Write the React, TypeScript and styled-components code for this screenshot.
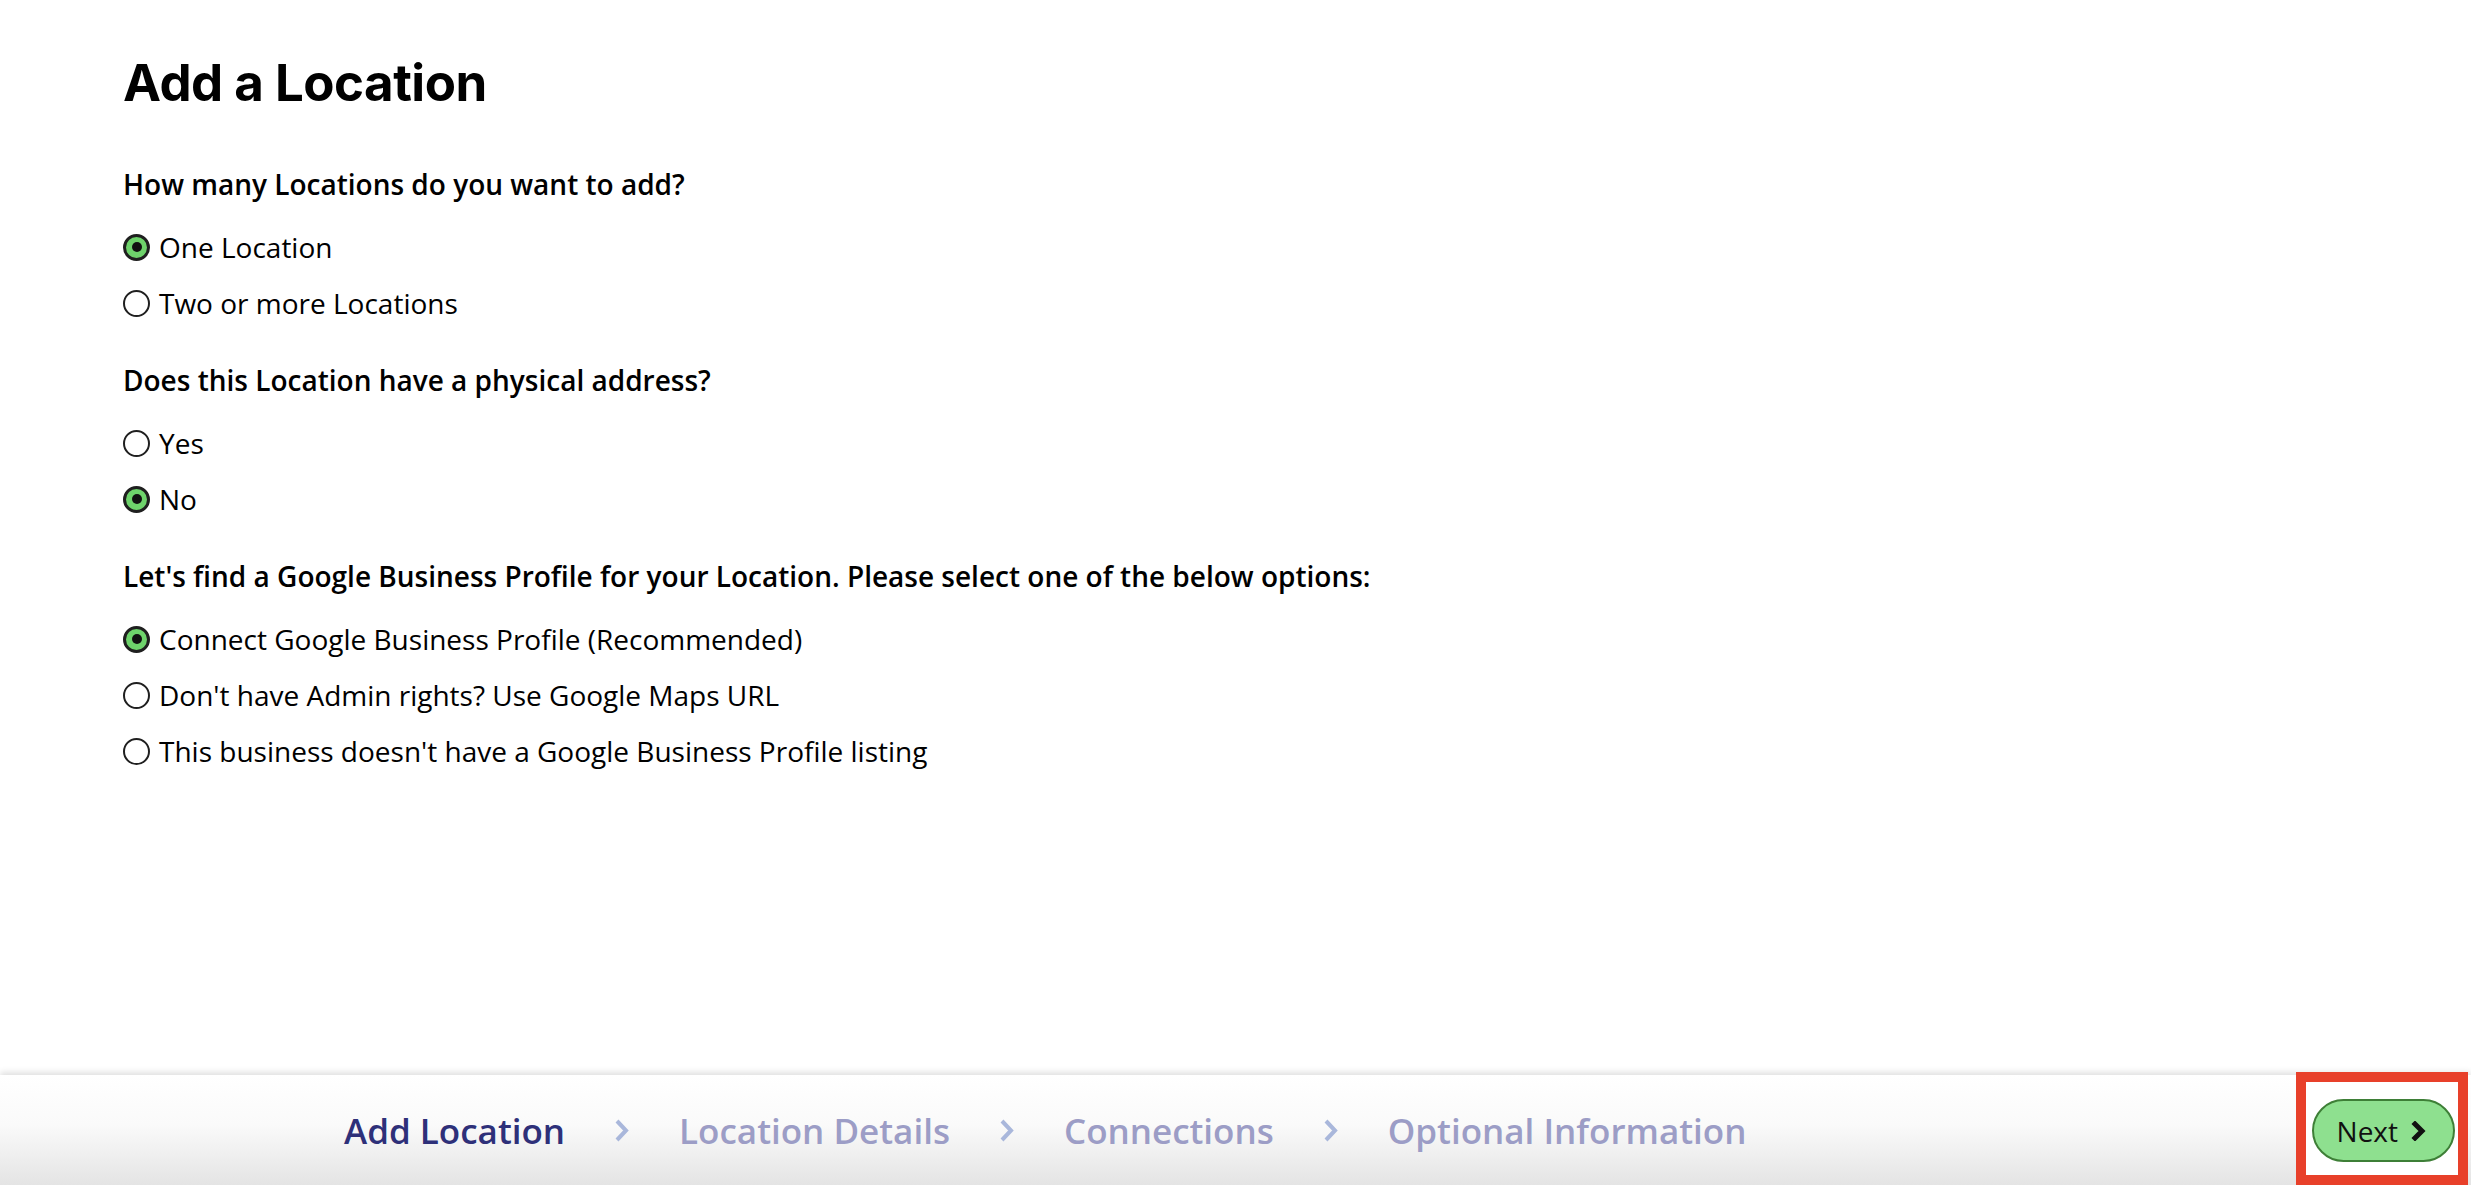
import React, { useState } from "react";
import styled, { createGlobalStyle } from "styled-components";

type Option = { value: string; label: string };
type Question = { name: string; title: string; options: Option[]; initial: string };

const questions: Question[] = [
  {
    name: "count",
    title: "How many Locations do you want to add?",
    options: [
      { value: "one", label: "One Location" },
      { value: "many", label: "Two or more Locations" },
    ],
    initial: "one",
  },
  {
    name: "physical",
    title: "Does this Location have a physical address?",
    options: [
      { value: "yes", label: "Yes" },
      { value: "no", label: "No" },
    ],
    initial: "no",
  },
  {
    name: "gbp",
    title: "Let's find a Google Business Profile for your Location. Please select one of the below options:",
    options: [
      { value: "connect", label: "Connect Google Business Profile (Recommended)" },
      { value: "maps", label: "Don't have Admin rights? Use Google Maps URL" },
      { value: "none", label: "This business doesn't have a Google Business Profile listing" },
    ],
    initial: "connect",
  },
];

const steps = ["Add Location", "Location Details", "Connections", "Optional Information"];

const App = () => {
  const [answers, setAnswers] = useState<Record<string, string>>(
    Object.fromEntries(questions.map((q) => [q.name, q.initial]))
  );

  return (
    <>
      <GlobalStyle />
      <Page>
        <Main>
          <Title>Add a Location</Title>
          {questions.map((q) => (
            <Section key={q.name}>
              <QuestionText>{q.title}</QuestionText>
              <Options>
                {q.options.map((o) => (
                  <RadioRow key={o.value}>
                    <HiddenInput
                      type="radio"
                      name={q.name}
                      checked={answers[q.name] === o.value}
                      onChange={() => setAnswers({ ...answers, [q.name]: o.value })}
                    />
                    <RadioDot checked={answers[q.name] === o.value} />
                    <span>{o.label}</span>
                  </RadioRow>
                ))}
              </Options>
            </Section>
          ))}
        </Main>

        <Footer>
          <Steps>
            {steps.map((s, i) => (
              <React.Fragment key={s}>
                {i > 0 && (
                  <StepArrow viewBox="0 0 14 23">
                    <polyline points="2,2 11,11.5 2,21" />
                  </StepArrow>
                )}
                <Step active={i === 0}>{s}</Step>
              </React.Fragment>
            ))}
          </Steps>
          <Highlight>
            <NextButton>
              Next
              <NextArrow viewBox="0 0 16 20">
                <polyline points="4,3 11,10 4,17" />
              </NextArrow>
            </NextButton>
          </Highlight>
        </Footer>
      </Page>
    </>
  );
};

// styles

const GlobalStyle = createGlobalStyle`
  * { box-sizing: border-box; }
  html, body { margin: 0; padding: 0; background: #fff; }
  body { font-family: "Open Sans", "Liberation Sans", sans-serif; color: #000; }
`;

const Page = styled.div`
  min-height: 100vh;
  display: flex;
  flex-direction: column;
`;

const Main = styled.main`
  flex: 1;
  padding: 53px 123px 0;
`;

const Title = styled.h1`
  margin: 0 0 54px;
  font-family: Inter, "Liberation Sans", sans-serif;
  font-weight: 700;
  font-size: 51px;
  line-height: 60px;
  letter-spacing: -0.5px;
  color: #000;
`;

const Section = styled.section`
  margin-bottom: 32px;
`;

const QuestionText = styled.p`
  margin: 0 0 18px;
  font-size: 28px;
  line-height: 34px;
  font-weight: 600;
`;

const Options = styled.div`
  display: flex;
  flex-direction: column;
`;

const RadioRow = styled.label`
  display: flex;
  align-items: center;
  gap: 9px;
  height: 56px;
  font-size: 28px;
  cursor: pointer;
`;

const HiddenInput = styled.input`
  display: none;
`;

const RadioDot = styled.span<{ checked: boolean }>`
  width: 27px;
  height: 27px;
  border-radius: 50%;
  flex-shrink: 0;
  border: ${(p) => (p.checked ? "3px solid #1f1f1f" : "2px solid #1f1f1f")};
  background: ${(p) => (p.checked ? "#6ed36b" : "#fff")};
  display: grid;
  place-items: center;
  &::after {
    content: "";
    display: ${(p) => (p.checked ? "block" : "none")};
    width: 10px;
    height: 10px;
    border-radius: 50%;
    background: #111;
  }
`;

const Footer = styled.footer`
  height: 110px;
  display: flex;
  align-items: center;
  background: linear-gradient(to bottom, #ffffff 0%, #fafafa 45%, #e4e4e4 100%);
  box-shadow: 0 -3px 6px rgba(0, 0, 0, 0.12);
`;

const Steps = styled.nav`
  flex: 1;
  display: flex;
  align-items: center;
  gap: 50px;
  padding-left: 344px;
`;

const Step = styled.span<{ active: boolean }>`
  font-size: 35px;
  font-weight: 600;
  line-height: 1;
  color: ${(p) => (p.active ? "#2e3079" : "#9c9dc6")};
`;

const StepArrow = styled.svg`
  width: 14px;
  height: 23px;
  fill: none;
  stroke: #a9b7db;
  stroke-width: 4;
`;

const Highlight = styled.div`
  align-self: flex-end;
  height: 113px;
  margin: -3px 3px 0 0;
  padding: 17px 3px 13px 6px;
  border: 10px solid #e8402a;
  background: #fff;
  display: flex;
  align-items: center;
`;

const NextButton = styled.button`
  display: flex;
  align-items: center;
  gap: 13px;
  height: 63px;
  padding: 0 26px 0 23px;
  border-radius: 32px;
  border: 2px solid #3e7f37;
  background: #8ee08f;
  font-family: "Open Sans", "Liberation Sans", sans-serif;
  font-size: 28px;
  color: #111;
  cursor: pointer;
`;

const NextArrow = styled.svg`
  width: 16px;
  height: 20px;
  fill: none;
  stroke: #111;
  stroke-width: 5;
  stroke-linecap: square;
  stroke-linejoin: miter;
`;

export default App;
